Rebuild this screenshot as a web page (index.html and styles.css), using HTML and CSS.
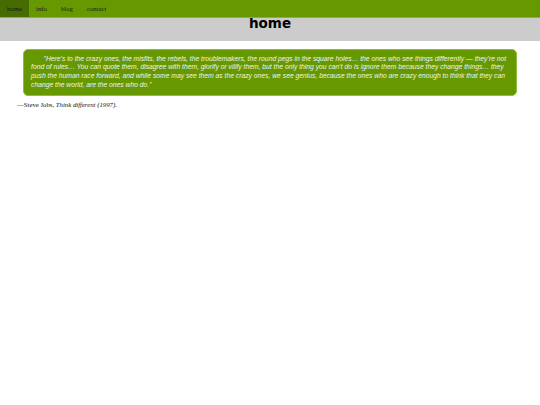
FILE: index.html
```html
<!DOCTYPE html>
<html lang="en">
<head>
<meta charset="utf-8">
<title>home</title>
<link rel="stylesheet" href="styles.css">
</head>
<body>
<nav class="topnav">
  <a class="topnav-link is-active" href="#">home</a>
  <a class="topnav-link" href="#">info</a>
  <a class="topnav-link" href="#">blog</a>
  <a class="topnav-link" href="#">contact</a>
</nav>
<header class="masthead">
  <h1 class="masthead-title">home</h1>
</header>
<main class="content">
  <blockquote class="quote">
    <p class="quote-text">"Here’s to the crazy ones, the misfits, the rebels, the troublemakers, the round pegs in the square holes… the ones who see things differently — they’re not fond of rules… You can quote them, disagree with them, glorify or vilify them, but the only thing you can’t do is ignore them because they change things… they push the human race forward, and while some may see them as the crazy ones, we see genius, because the ones who are crazy enough to think that they can change the world, are the ones who do."</p>
  </blockquote>
  <p class="attribution">—Steve Jobs, <cite class="attribution-work">Think different (1997).</cite></p>
</main>
</body>
</html>
```

FILE: styles.css
```css
html, body {
  margin: 0;
  padding: 0;
  background: #ffffff;
}

body {
  font-family: "Liberation Serif", "Times New Roman", serif;
  font-size: 6.75px;
  color: #111111;
}

.topnav {
  position: fixed;
  top: 0;
  left: 0;
  right: 0;
  height: 17px;
  display: flex;
  align-items: stretch;
  background: #669900;
  border-bottom: 1px solid #86b53a;
  z-index: 10;
}

.topnav-link {
  display: flex;
  align-items: center;
  padding: 0 7px;
  color: #1a1a1a;
  text-decoration: none;
  font-size: 6.75px;
}

.topnav-link.is-active {
  background: #466b00;
}

.masthead {
  height: 41px;
  background: #cccccc;
  text-align: center;
}

.masthead-title {
  margin: 0;
  padding-top: 14.8px;
  font-family: "DejaVu Sans", Verdana, sans-serif;
  font-weight: bold;
  font-size: 13.5px;
  line-height: 16px;
  color: #000000;
}

.content {
  padding-top: 7.7px;
}

.quote {
  margin: 0 23px;
  padding: 5px 8px 5px 7px;
  background: #669900;
  border: 1px solid #8cbf3c;
  border-radius: 5px;
}

.quote-text {
  margin: 0;
  font-family: "Liberation Sans", Arial, sans-serif;
  font-style: italic;
  font-size: 6.75px;
  line-height: 8.8px;
  color: #f2f2f2;
  text-indent: 12.5px;
}

.attribution {
  margin: 5px 0 0 17px;
  font-size: 6.75px;
  color: #111111;
}

.attribution-work {
  font-style: italic;
}
```
